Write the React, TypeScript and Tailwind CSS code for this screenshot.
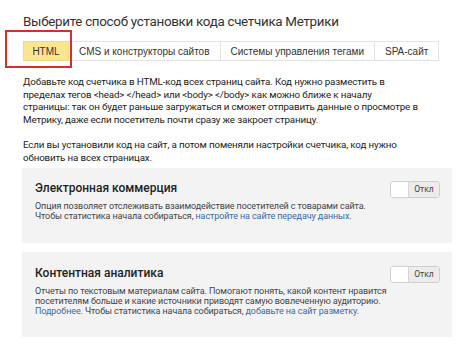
import React from 'react';

const tabs = ['HTML', 'CMS и конструкторы сайтов', 'Системы управления тегами', 'SPA-сайт'];

const Toggle: React.FC = () => (
  <div className="flex h-[17px] w-[50px] shrink-0 overflow-hidden rounded-[3px] border border-[#cfcfcf]">
    <div className="w-[18px] border-r border-[#d6d6d6] bg-white" />
    <div className="flex flex-1 items-center justify-center bg-[#ececec] text-[8.5px] text-[#444]">Откл</div>
  </div>
);

interface OptionProps {
  title: string;
  children: React.ReactNode;
}

const Option: React.FC<OptionProps> = ({ title, children }) => (
  <div className="bg-[#f3f3f4] pl-[13px] pr-[12px]">
    <div className="flex items-start justify-between">
      <div>
        <div className="text-[12px] font-medium leading-[15px] text-[#222]">{title}</div>
        <div className="mt-[6px] text-[9px] leading-[9.7px] tracking-[-0.1px] text-[#444]">{children}</div>
      </div>
      <Toggle />
    </div>
  </div>
);

export default function App() {
  return (
    <div className="h-[345px] w-[474px] overflow-hidden bg-white font-['Roboto',sans-serif] text-[#222]">
      <div className="pl-[23px] pt-[12px]">
        <h1 className="text-[13.4px] leading-[20px] tracking-[-0.3px] text-[#333]">
          Выберите способ установки кода счетчика Метрики
        </h1>

        {/* табы */}
        <div className="relative mt-[9px] flex h-[20px] w-fit font-['Liberation_Sans',sans-serif] text-[10px] text-[#333]">
          {tabs.map((t, i) => (
            <div
              key={t}
              className={
                i === 0
                  ? 'flex w-[46px] items-center justify-center border border-[#f2d98a] bg-[#fde58f]'
                  : 'flex items-center justify-center border border-l-0 border-[#e3e3e3] px-[10px]'
              }
            >
              {t}
            </div>
          ))}
          <div className="absolute left-[-18px] top-[-11px] h-[38px] w-[67px] border-2 border-[#d32f2f]" />
        </div>

        <div className="mt-[15px] text-[9.8px] leading-[12.6px] tracking-[-0.15px] text-[#222]">
          <p>
            Добавьте код счетчика в HTML-код всех страниц сайта. Код нужно разместить в<br />
            пределах тегов &lt;head&gt; &lt;/head&gt; или &lt;body&gt; &lt;/body&gt; как можно ближе к началу<br />
            страницы: так он будет раньше загружаться и сможет отправить данные о просмотре в<br />
            Метрику, даже если посетитель почти сразу же закроет страницу.
          </p>
          <p className="mt-[12.6px]">
            Если вы установили код на сайт, а потом поменяли настройки счетчика, код нужно<br />
            обновить на всех страницах.
          </p>
        </div>
      </div>

      <div className="mx-[22px] mt-[4px] flex flex-col gap-[9px]">
        <div className="h-[75px] bg-[#f3f3f4] pt-[13px]">
          <Option title="Электронная коммерция">
            Опция позволяет отслеживать взаимодействие посетителей с товарами сайта.<br />
            Чтобы статистика начала собираться,{' '}
            <span className="text-[#3d6aa8]">настройте на сайте передачу данных</span>.
          </Option>
        </div>
        <div className="h-[85px] bg-[#f3f3f4] pt-[14px]">
          <Option title="Контентная аналитика">
            Отчеты по текстовым материалам сайта. Помогают понять, какой контент нравится<br />
            посетителям больше и какие источники приводят самую вовлеченную аудиторию.<br />
            <span className="text-[#3d6aa8]">Подробнее</span>. Чтобы статистика начала собираться,{' '}
            <span className="text-[#3d6aa8]">добавьте на сайт разметку</span>.
          </Option>
        </div>
      </div>
    </div>
  );
}
